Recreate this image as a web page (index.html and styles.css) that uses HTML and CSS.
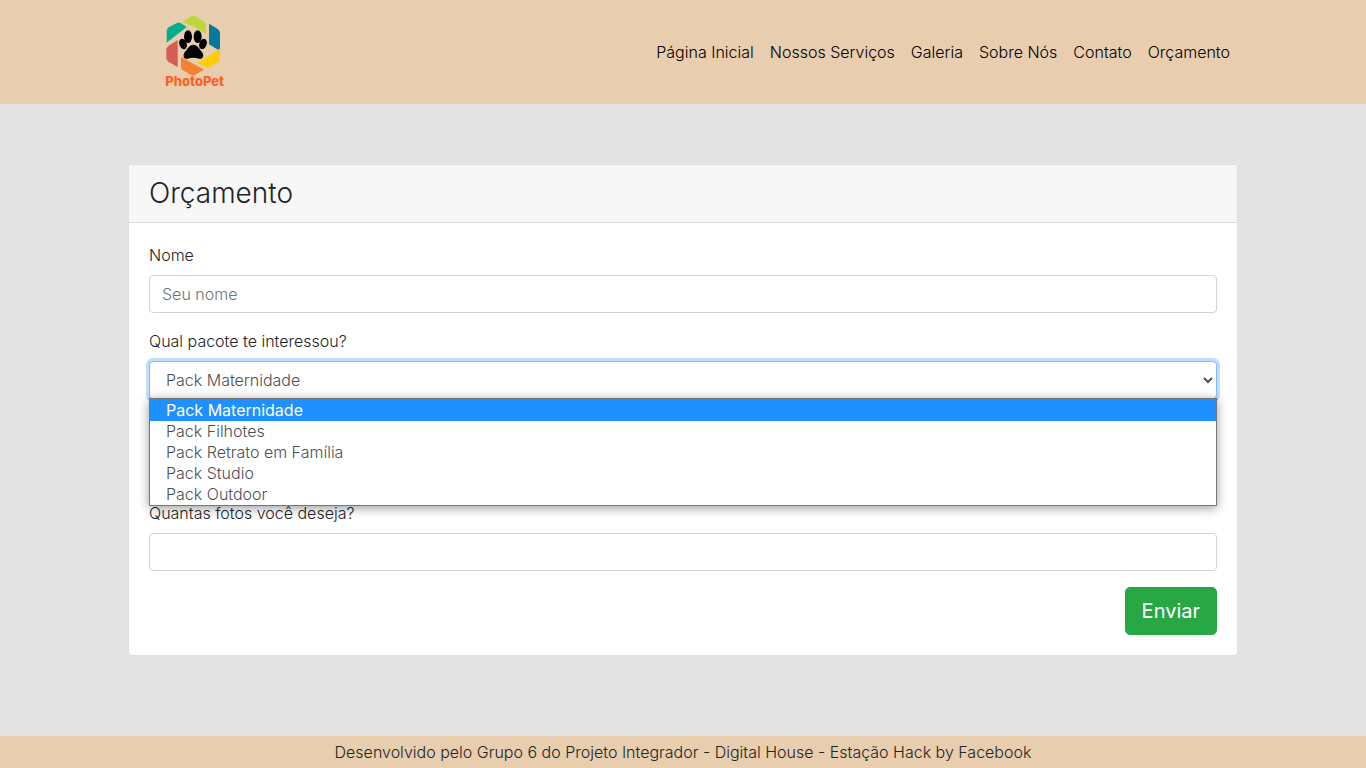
FILE: index.html
```html
<!DOCTYPE html>
<html lang="pt-BR">
<head>
<meta charset="utf-8">
<meta name="viewport" content="width=device-width, initial-scale=1">
<title>PhotoPet - Orçamento</title>
<link rel="stylesheet" href="styles.css">
</head>
<body>
<header class="topbar">
  <div class="container topbar-inner">
    <a class="brand" href="#" aria-label="PhotoPet">
      <svg class="brand-logo" viewBox="0 0 240 264" aria-hidden="true">
        <path fill="#bfd63b" d="M85 43 L112 25 Q118 22 124 25 L151 41 Q156 45 156 52 V78 L122 57 Z"/>
        <path fill="#04ae8c" d="M38 104 V69 Q38 61 45 57 L69 45 Q75 42 81 46 L98 57 Z"/>
        <path fill="#04799c" d="M165 47 L190 62 Q198 67 198 75 V120 Q198 127 192 125 L165 109 Z"/>
        <path fill="#d65c56" d="M71 96 V177 L43 161 Q37 157 37 149 V127 Q37 118 44 113 Z"/>
        <path fill="#ffcc0a" d="M198 122 V154 Q198 160 192 163 L166 178 Q160 181 154 178 L129 165 Z"/>
        <path fill="#f58233" d="M81 147 L150 185 L124 200 Q117 204 110 200 L87 187 Q81 183 81 176 Z"/>
        <ellipse cx="102" cy="86" rx="12" ry="19"/>
        <ellipse cx="131" cy="86" rx="12" ry="19"/>
        <ellipse cx="87" cy="108" rx="11" ry="16" transform="rotate(-20 87 108)"/>
        <ellipse cx="147" cy="108" rx="11" ry="16" transform="rotate(20 147 108)"/>
        <path d="M118 110 C130 110 136 123 143 131 C153 143 146 155 135 152 C124 148 112 148 101 152 C90 155 84 143 93 131 C101 123 106 110 118 110 Z"/>
        <text class="brand-name" x="122" y="233" text-anchor="middle">PhotoPet</text>
      </svg>
    </a>
    <nav class="menu">
      <a class="menu-link" href="#">Página Inicial</a>
      <a class="menu-link" href="#">Nossos Serviços</a>
      <a class="menu-link" href="#">Galeria</a>
      <a class="menu-link" href="#">Sobre Nós</a>
      <a class="menu-link" href="#">Contato</a>
      <a class="menu-link" href="#">Orçamento</a>
    </nav>
  </div>
</header>
<main class="container content">
  <section class="card">
    <h1 class="card-header">Orçamento</h1>
    <form class="card-body">
      <div class="field">
        <label class="label" for="nome">Nome</label>
        <input class="control" id="nome" type="text" placeholder="Seu nome">
      </div>
      <div class="field field-open">
        <label class="label" for="pacote">Qual pacote te interessou?</label>
        <div class="dropdown">
          <select class="control control-active" id="pacote">
            <option>Pack Maternidade</option>
            <option>Pack Filhotes</option>
            <option>Pack Retrato em Família</option>
            <option>Pack Studio</option>
            <option>Pack Outdoor</option>
          </select>
          <ul class="options" role="listbox" aria-label="Pacotes">
            <li class="option option-selected" role="option" aria-selected="true">Pack Maternidade</li>
            <li class="option" role="option">Pack Filhotes</li>
            <li class="option" role="option">Pack Retrato em Família</li>
            <li class="option" role="option">Pack Studio</li>
            <li class="option" role="option">Pack Outdoor</li>
          </ul>
        </div>
      </div>
      <div class="field">
        <label class="label" for="fotos">Quantas fotos você deseja?</label>
        <input class="control" id="fotos" type="text">
      </div>
      <div class="actions">
        <button class="submit" type="submit">Enviar</button>
      </div>
    </form>
  </section>
</main>
<footer class="footer">Desenvolvido pelo Grupo 6 do Projeto Integrador - Digital House - Estação Hack by Facebook</footer>
</body>
</html>
```
FILE: styles.css
```css
*, *::before, *::after { box-sizing: border-box; }

body {
  margin: 0;
  min-height: 100vh;
  display: flex;
  flex-direction: column;
  background: #e4e4e4;
  color: #212529;
  font-family: Inter, "Liberation Sans", sans-serif;
  font-size: 16px;
  font-weight: 300;
  line-height: 24px;
}

.container {
  width: 100%;
  max-width: 1140px;
  margin: 0 auto;
  padding: 0 15px;
}

.topbar { background: #e8cdae; padding: 8px 0; }
.topbar-inner {
  display: flex;
  align-items: center;
  justify-content: space-between;
}
.brand { display: block; margin-left: 26px; }
.brand-logo { display: block; width: 80px; height: 88px; }
.brand-name {
  fill: #fb6128;
  font-family: Inter, sans-serif;
  font-size: 39px;
  font-weight: 800;
}

.menu { display: flex; flex-wrap: wrap; }
.menu-link { padding: 8px; color: #000; text-decoration: none; }

.content { flex: 1; padding-top: 60px; padding-bottom: 60px; }

.card {
  background: #fff;
  border: 1px solid rgba(0, 0, 0, 0.125);
  border-radius: 4px;
}
.card-header {
  margin: 0;
  padding: 12px 20px;
  background: #f7f7f7;
  border-bottom: 1px solid rgba(0, 0, 0, 0.125);
  border-radius: 3px 3px 0 0;
  font-size: 28px;
  font-weight: 300;
  line-height: 33px;
}
.card-body { padding: 20px; }

.field { margin-bottom: 16px; }
.field-open { margin-bottom: 102px; }
.label { display: block; margin-bottom: 8px; }

.control {
  display: block;
  width: 100%;
  height: 38px;
  padding: 6px 12px;
  background: #fff;
  border: 1px solid #ced4da;
  border-radius: 4px;
  color: #495057;
  font: inherit;
  outline: 0;
}
.control::placeholder { color: #6c757d; opacity: 1; }
.control-active {
  border-color: #80bdff;
  box-shadow: 0 0 0 3px rgba(0, 123, 255, 0.25);
}

.dropdown { position: relative; }
.options {
  position: absolute;
  top: 100%;
  left: 0;
  right: 0;
  margin: -1px 0 0;
  padding: 0;
  list-style: none;
  background: #fff;
  border: 1px solid #767676;
  box-shadow: 0 2px 10px rgba(0, 0, 0, 0.4);
  color: #495057;
}
.option { padding: 0 16px; line-height: 21px; }
.option-selected { padding-top: 1px; background: #1e90ff; color: #fff; font-weight: 400; }

.actions { display: flex; justify-content: flex-end; }
.submit {
  padding: 8px 16px;
  background: #28a745;
  border: 1px solid #28a745;
  border-radius: 5px;
  color: #fff;
  font: inherit;
  font-size: 20px;
  font-weight: 400;
  line-height: 30px;
}

.footer {
  padding: 4px 16px;
  background: #e8cdae;
  text-align: center;
}
```
